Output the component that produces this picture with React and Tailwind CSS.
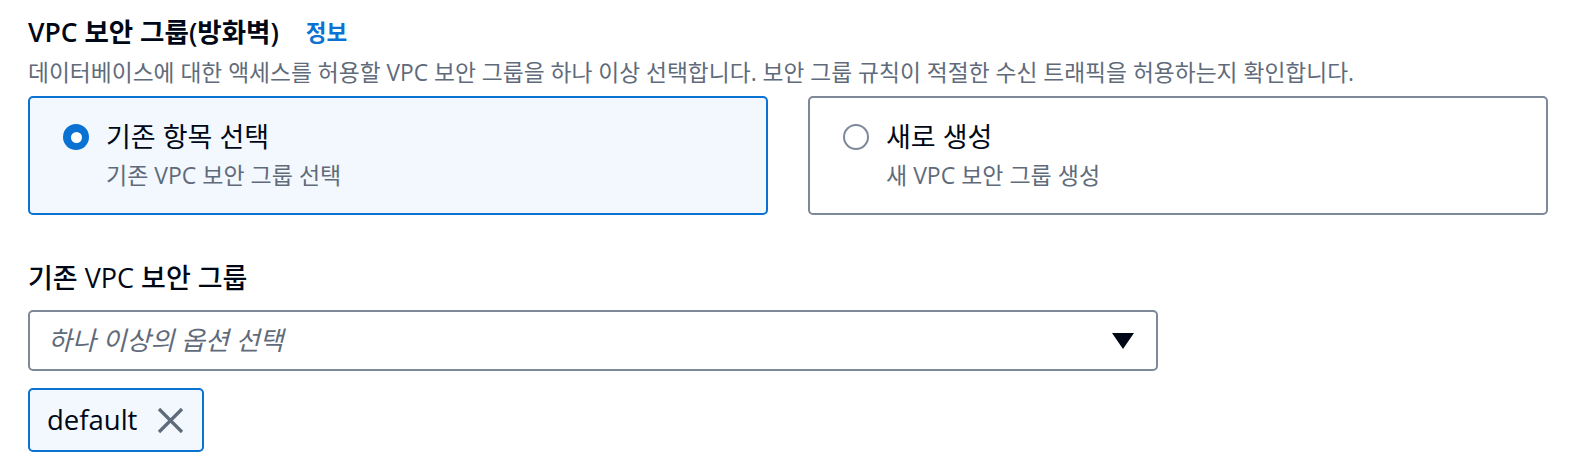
import { useState } from "react";

const font = { fontFamily: '"Open Sans", "Noto Sans CJK KR", sans-serif' };

function Radio({ checked }) {
  return checked ? (
    <span className="w-[26px] h-[26px] rounded-full bg-[#0972d3] flex items-center justify-center shrink-0">
      <span className="w-[11px] h-[11px] rounded-full bg-white" />
    </span>
  ) : (
    <span className="w-[26px] h-[26px] rounded-full border-2 border-[#7d8998] bg-white shrink-0" />
  );
}

function Tile({ checked, title, desc, onClick }) {
  return (
    <div
      onClick={onClick}
      className={`h-[119px] rounded-[5px] border-2 pl-[33px] pt-[22px] cursor-pointer ${
        checked ? "border-[#0972d3] bg-[#f2f8fd]" : "border-[#7d8998] bg-white"
      }`}>
      <div className="flex items-center gap-[17px] h-[34px]">
        <Radio checked={checked} />
        <span className="text-[27px] leading-[34px] text-[#000716]">{title}</span>
      </div>
      <div className="pl-[43px] mt-[6px] text-[23px] leading-[30px] text-[#5f6b7a]">{desc}</div>
    </div>
  );
}

export default function App() {
  const [selected, setSelected] = useState("existing");

  return (
    <div className="bg-white w-[1584px] h-[476px] pl-[28px] pt-[18px]" style={font}>
      <div className="flex items-center h-[30px]">
        <span className="text-[26.5px] font-semibold text-[#000716]">VPC 보안 그룹(방화벽)</span>
        <span className="ml-[27px] text-[22.5px] font-bold text-[#0972d3]">정보</span>
      </div>
      <div className="mt-[12px] h-[26px] flex items-center text-[22.75px] text-[#5f6b7a] whitespace-nowrap">
        데이터베이스에 대한 액세스를 허용할 VPC 보안 그룹을 하나 이상 선택합니다. 보안 그룹 규칙이 적절한 수신 트래픽을 허용하는지 확인합니다.
      </div>
      <div className="mt-[10px] grid grid-cols-2 gap-[40px] w-[1520px]">
        <Tile
          checked={selected == "existing"}
          title="기존 항목 선택"
          desc="기존 VPC 보안 그룹 선택"
          onClick={() => setSelected("existing")}
        />
        <Tile
          checked={selected == "new"}
          title="새로 생성"
          desc="새 VPC 보안 그룹 생성"
          onClick={() => setSelected("new")}
        />
      </div>
      <div className="mt-[48px] h-[30px] flex items-center text-[27px] font-medium text-[#000716]">기존 VPC 보안 그룹</div>
      <div className="mt-[17px] w-[1130px] h-[61px] rounded-[5px] border-2 border-[#7d8998] flex items-center justify-between pl-[18px] pr-[22px]">
        <span className="italic text-[26px] text-[#5f6b7a]">하나 이상의 옵션 선택</span>
        <svg width="22" height="16" viewBox="0 0 22 16">
          <path d="M0 0 H22 L11 16 Z" fill="#000716" />
        </svg>
      </div>
      <div className="mt-[17px] w-[176px] h-[64px] rounded-[5px] border-2 border-[#0972d3] bg-[#f2f8fd] flex items-center pl-[17px] gap-[20px]">
        <span className="text-[27.5px] text-[#000716]">default</span>
        <svg width="27" height="27" viewBox="0 0 27 27">
          <path d="M2 2 L25 25 M25 2 L2 25" stroke="#5f6b7a" strokeWidth="3.2" fill="none" />
        </svg>
      </div>
    </div>
  );
}
